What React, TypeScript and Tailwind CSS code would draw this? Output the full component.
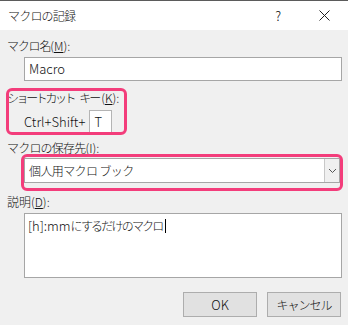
import React from 'react';

export default function App() {
  return (
    <div
      className={`relative w-[348px] h-[325px] overflow-hidden bg-[#f0f0f0] text-[12px] leading-[16px] text-[#111] border-t border-[#5b5b5b] font-['Noto_Sans_CJK_JP','Liberation_Sans',sans-serif] font-light`}
    >
      {/* title bar */}
      <div className="flex h-[29px] items-center bg-white pl-[8px]">
        <span className="text-[12px] tracking-[-0.8px]">マクロの記録</span>
        <span className="ml-auto mr-[38px] text-[13px]">?</span>
        <svg width="11" height="11" viewBox="0 0 11 11" className="mr-[18px]">
          <path d="M0.5 0.5 L10.5 10.5 M10.5 0.5 L0.5 10.5" stroke="#222" strokeWidth="1" />
        </svg>
      </div>

      <div className="px-[7px] pt-[8px]">
        <div>
          <span className="tracking-[-1.2px]">マクロ名</span>(<span className="underline">M</span>):
        </div>
        <div className="ml-[17px] mt-[3px] flex h-[24px] w-[318px] items-center border border-[#a6a6a6] bg-white px-[4px] text-[13px]">
          Macro
        </div>

        <div className="mt-[9px] flex">
          <span className="tracking-[-2.4px]">ショートカット</span>
          <span className="ml-[5px] tracking-[-2px]">キー</span>
          <span className="ml-[2px]">
            (<span className="underline">K</span>):
          </span>
        </div>
        <div className="mt-[4px] ml-[17px] flex items-center">
          <span className="text-[13px]">Ctrl+Shift+</span>
          <div className="ml-[4px] flex h-[23px] w-[23px] items-center border border-[#b4b4b4] bg-white pl-[4px] text-[13px]">
            T
          </div>
        </div>

        <div className="mt-[7px]">
          <span className="tracking-[-0.8px]">マクロの保存先</span>(<span className="underline">I</span>):
        </div>
        <div className="ml-[17px] mt-[2px] flex h-[25px] w-[316px] items-stretch border border-[#a6a6a6] bg-white">
          <div className="flex flex-1 items-center px-[4px] tracking-[-0.6px]">個人用マクロ ブック</div>
          <div className="flex w-[15px] items-center justify-center border-l border-[#c8c8c8] bg-[#f0f0f0]">
            <svg width="9" height="6" viewBox="0 0 9 6">
              <path d="M1 1 L4.5 4.5 L8 1" stroke="#555" strokeWidth="1" fill="none" />
            </svg>
          </div>
        </div>

        <div className="mt-[11px]">
          説明(<span className="underline">D</span>):
        </div>
        <div className="ml-[17px] mt-[3px] h-[65px] w-[318px] border border-[#a6a6a6] bg-white px-[3px] pt-[3px]">
          <span className="text-[13px]">[h]:mm</span>
          <span className="tracking-[-1.8px]">にするだけのマクロ</span>
          <span className="ml-[2px] inline-block h-[14px] w-px translate-y-[2px] bg-black" />
        </div>

        <div className="mt-[14px] flex justify-end gap-[10px]">
          <button className="h-[25px] w-[74px] border border-[#adadad] bg-[#e1e1e1] text-[13px]">OK</button>
          <button className="h-[25px] w-[74px] border border-[#adadad] bg-[#e1e1e1] tracking-[-1px]">キャンセル</button>
        </div>
      </div>

      {/* annotation frames */}
      <div className="absolute left-[6px] top-[87px] h-[47px] w-[121px] rounded-[6px] border-[3px] border-[#f33d7b]" />
      <div className="absolute left-[21px] top-[153px] h-[37px] w-[322px] rounded-[6px] border-[3px] border-[#f33d7b]" />
    </div>
  );
}
